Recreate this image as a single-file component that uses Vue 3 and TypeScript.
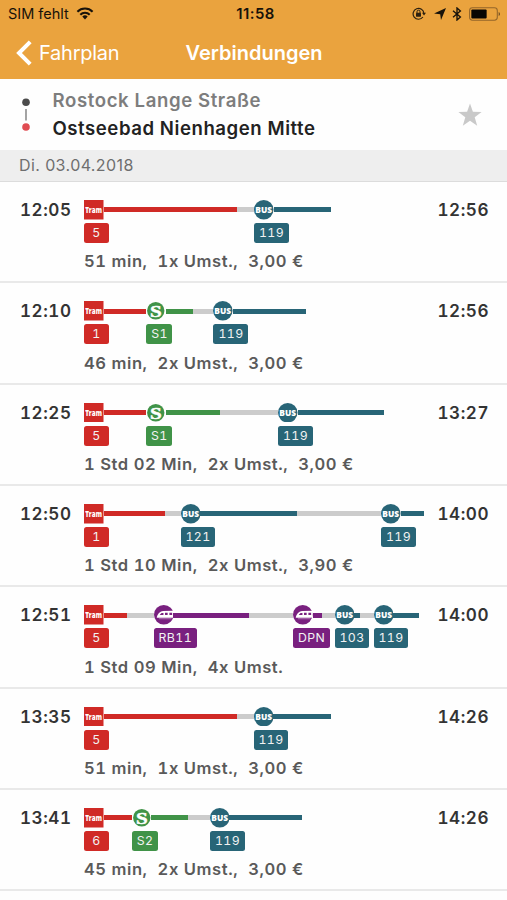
<script setup lang="ts">
type Mode = 'tram' | 'bus' | 'sbahn' | 'train'

interface Leg {
  mode: Mode
  line: string
  ride: number
  wait: number
}

interface Connection {
  departure: string
  arrival: string
  summary: string[]
  legs: Leg[]
}

const leg = (mode: Mode, line: string, ride: number, wait = 0): Leg => ({ mode, line, ride, wait })

const connections: Connection[] = [
  {
    departure: '12:05',
    arrival: '12:56',
    summary: ['51 min,', '1x Umst.,', '3,00 €'],
    legs: [leg('tram', '5', 153, 17), leg('bus', '119', 77)],
  },
  {
    departure: '12:10',
    arrival: '12:56',
    summary: ['46 min,', '2x Umst.,', '3,00 €'],
    legs: [leg('tram', '1', 62.3), leg('sbahn', 'S1', 47.2, 20), leg('bus', '119', 93)],
  },
  {
    departure: '12:25',
    arrival: '13:27',
    summary: ['1 Std 02 Min,', '2x Umst.,', '3,00 €'],
    legs: [leg('tram', '5', 62), leg('sbahn', 'S1', 74, 58), leg('bus', '119', 106.3)],
  },
  {
    departure: '12:50',
    arrival: '14:00',
    summary: ['1 Std 10 Min,', '2x Umst.,', '3,90 €'],
    legs: [leg('tram', '1', 81, 15.5), leg('bus', '121', 116.5, 84), leg('bus', '119', 43)],
  },
  {
    departure: '12:51',
    arrival: '14:00',
    summary: ['1 Std 09 Min,', '4x Umst.'],
    legs: [
      leg('tram', '5', 43, 26.5),
      leg('train', 'RB11', 95.5, 44),
      leg('train', 'DPN', 29, 12.5),
      leg('bus', '103', 25, 14),
      leg('bus', '119', 45.5),
    ],
  },
  {
    departure: '13:35',
    arrival: '14:26',
    summary: ['51 min,', '1x Umst.,', '3,00 €'],
    legs: [leg('tram', '5', 152.7, 16.8), leg('bus', '119', 77)],
  },
  {
    departure: '13:41',
    arrival: '14:26',
    summary: ['45 min,', '2x Umst.,', '3,00 €'],
    legs: [leg('tram', '6', 47.7), leg('sbahn', 'S2', 56.3, 22), leg('bus', '119', 92)],
  },
]
</script>

<template>
  <div class="screen">
    <header class="top">
      <div class="status">
        <div class="carrier">
          <span>SIM fehlt</span>
          <svg class="wifi" viewBox="0 0 18 13">
            <path d="M9 12.4 6.3 9.6a3.9 3.9 0 0 1 5.4 0Z" fill="#17120a" />
            <path d="M4.3 7.7a6.7 6.7 0 0 1 9.4 0M1.4 4.7a10.8 10.8 0 0 1 15.2 0" fill="none" stroke="#17120a" stroke-width="2.1" />
          </svg>
        </div>
        <span class="clock">11:58</span>
        <div class="indicators">
          <svg class="lock" viewBox="0 0 14 13">
            <path d="M10.9 10A5.4 5.4 0 1 1 11.9 6.5" fill="none" stroke="#2c200f" stroke-width="1.2" />
            <path d="M10 5.8h4l-2 2.8Z" fill="#2c200f" />
            <rect x="4" y="5.8" width="5" height="3.9" rx=".4" fill="#2c200f" />
            <path d="M5 6V4.7a1.5 1.5 0 0 1 3 0V6" fill="none" stroke="#2c200f" stroke-width="1" />
          </svg>
          <svg class="arrow" viewBox="0 0 12 12"><path d="M12 0 7 12 6.2 6.2 0 5.4Z" fill="#17120a" /></svg>
          <svg class="bluetooth" viewBox="0 0 10 14">
            <path d="M1 3.8 8.4 10 5 13V1l3.4 3L1 10.2" fill="none" stroke="#17120a" stroke-width="1.35" />
          </svg>
          <svg class="battery" viewBox="0 0 33 14">
            <rect x=".6" y=".6" width="28.6" height="12.8" rx="3" fill="none" stroke="#94662a" stroke-width="1.1" />
            <rect x="2.4" y="2.3" width="15.8" height="9.4" rx="1" fill="#080602" />
            <path d="M30.6 5v4c1.8-.5 1.8-3.5 0-4Z" fill="#6c4a20" />
          </svg>
        </div>
      </div>
      <nav class="nav">
        <div class="back">
          <svg class="chevron" viewBox="0 0 16 26"><path d="M14.2 1.8 3 13l11.2 11.2" fill="none" stroke="#fff" stroke-width="4" /></svg>
          <span>Fahrplan</span>
        </div>
        <h1>Verbindungen</h1>
      </nav>
    </header>

    <section class="route">
      <svg class="route-mark" viewBox="0 0 8 34">
        <circle cx="4" cy="4.2" r="3.8" fill="#4b4b4b" />
        <path d="M4 11v11.5" stroke="#9a9a9a" stroke-width="1.8" />
        <circle cx="4" cy="29" r="3.8" fill="#e04c52" />
      </svg>
      <div class="stops">
        <div class="from">Rostock Lange Straße</div>
        <div class="to">Ostseebad Nienhagen Mitte</div>
      </div>
      <svg class="star" viewBox="0 0 24 24">
        <path d="m12 .5 2.9 8.3 8.7.2-6.9 5.3 2.5 8.5L12 17.8l-7.2 5 2.5-8.5L.4 9l8.7-.2Z" fill="#c9c9c9" />
      </svg>
    </section>

    <div class="date">Di. 03.04.2018</div>

    <main>
      <article v-for="item in connections" :key="item.departure" class="connection">
        <time class="departure">{{ item.departure }}</time>
        <div class="middle">
          <div class="legs">
            <div
              v-for="(part, i) in item.legs"
              :key="i"
              class="leg"
              :class="part.mode"
              :style="{ width: part.ride + part.wait + 'px' }"
            >
              <div class="track">
                <svg class="mode-icon" viewBox="0 0 20 20">
                  <template v-if="part.mode === 'tram'">
                    <rect width="20" height="20" fill="#d02a26" />
                    <text x="1.2" y="12.9" textLength="17.2" lengthAdjust="spacingAndGlyphs" class="tram-text">Tram</text>
                  </template>
                  <template v-else-if="part.mode === 'bus'">
                    <circle cx="10" cy="10" r="10" fill="#286577" />
                    <text x="1.4" y="13.2" textLength="17.2" lengthAdjust="spacingAndGlyphs" class="bus-text">BUS</text>
                  </template>
                  <template v-else-if="part.mode === 'sbahn'">
                    <circle cx="10" cy="10" r="8.9" fill="#409348" />
                    <text x="4" y="16" textLength="12" lengthAdjust="spacingAndGlyphs" class="s-text">S</text>
                  </template>
                  <template v-else>
                    <circle cx="10" cy="10" r="10" fill="#79207f" />
                    <path d="M2.8 13C3.4 9.8 5.6 6.6 9.4 6.2L20 5.8V13Z" fill="#fff" />
                    <path d="M7.8 8.1h1.9v2.1H5.9c.5-.9 1.1-1.6 1.9-2.1ZM11.3 8h2.7v2.2h-2.7ZM15.8 7.9h2.8v2.3h-2.8Z" fill="#79207f" />
                    <path d="M5 14.1h13" stroke="#c99bcc" stroke-width=".7" />
                  </template>
                </svg>
                <i class="ride"></i>
                <i class="wait" :style="{ width: part.wait + 'px' }"></i>
              </div>
              <span class="badge">{{ part.line }}</span>
            </div>
          </div>
          <div class="summary">
            <span v-for="text in item.summary" :key="text">{{ text }}</span>
          </div>
        </div>
        <time class="arrival">{{ item.arrival }}</time>
      </article>
    </main>
  </div>
</template>

<style>
body {
  background: #fff;
}
</style>

<style scoped>
.screen {
  width: 507px;
  height: 900px;
  overflow: hidden;
  background: #fefefe;
  font-family: Inter, 'Liberation Sans', sans-serif;
}
svg {
  display: block;
  flex: none;
}
.top {
  height: 79px;
  background: #eaa33e;
}
.status {
  display: grid;
  grid-template-columns: 1fr auto 1fr;
  align-items: center;
  height: 27px;
  padding: 0 6px 0 8px;
  color: #17120a;
  font-size: 14.5px;
}
.carrier {
  display: flex;
  align-items: center;
  gap: 7.5px;
}
.wifi {
  width: 18px;
  height: 13px;
}
.clock {
  padding-left: 2px;
  font-size: 14.9px;
  font-weight: 600;
  letter-spacing: 0.5px;
}
.indicators {
  display: flex;
  justify-content: flex-end;
  align-items: center;
}
.lock {
  width: 14px;
  height: 13px;
  margin-right: 8px;
}
.arrow {
  width: 12px;
  height: 12px;
  margin-right: 6.5px;
}
.bluetooth {
  width: 10px;
  height: 14px;
  margin-right: 7px;
}
.battery {
  width: 32px;
  height: 14px;
}
.nav {
  display: grid;
  grid-template-columns: 1fr auto 1fr;
  align-items: center;
  height: 51px;
  padding: 0 15px 0 16px;
  color: #fff;
}
.back {
  display: flex;
  align-items: center;
  gap: 7px;
  font-size: 20px;
  letter-spacing: -0.25px;
}
.chevron {
  width: 16px;
  height: 26px;
}
h1 {
  margin: 0;
  font-size: 20px;
  font-weight: 600;
}
.route {
  display: flex;
  align-items: center;
  box-sizing: border-box;
  height: 71px;
  padding: 0 25px 0 22px;
}
.route-mark {
  width: 8px;
  height: 34px;
  margin-right: 22.5px;
}
.stops {
  flex: 1;
  padding-bottom: 2px;
  font-size: 18.6px;
  font-weight: 600;
  line-height: 28px;
  letter-spacing: 0.6px;
}
.from {
  color: #7d7d7d;
}
.to {
  color: #222;
  letter-spacing: 0.55px;
}
.star {
  width: 24px;
  height: 24px;
}
.date {
  box-sizing: border-box;
  height: 32px;
  padding-left: 19px;
  border-bottom: 1px solid #dcdcdc;
  background: #eee;
  color: #6e6e6e;
  font-size: 16px;
  line-height: 31px;
  letter-spacing: 0.4px;
}
.connection {
  display: flex;
  box-sizing: border-box;
  height: 101.35px;
  padding: 18px 18px 0 20px;
  border-bottom: 2px solid #e9e9e9;
  font-variant-numeric: tabular-nums;
}
time {
  color: #333;
  font-size: 17.1px;
  font-weight: 600;
  line-height: 20px;
  letter-spacing: 0.55px;
}
.departure {
  width: 64px;
}
.middle {
  flex: 1;
}
.legs {
  display: flex;
}
.leg {
  flex: none;
}
.tram {
  --tone: #d02a26;
}
.bus {
  --tone: #286577;
}
.sbahn {
  --tone: #409348;
}
.train {
  --tone: #79207f;
}
.track {
  display: flex;
  align-items: center;
  height: 19.5px;
}
.mode-icon {
  width: 19.5px;
  height: 19.5px;
}
.ride {
  flex: 1;
  height: 5px;
  background: var(--tone);
}
.wait {
  flex: none;
  height: 5px;
  background: #ccc;
}
.badge {
  display: block;
  box-sizing: border-box;
  width: fit-content;
  min-width: 24.5px;
  height: 20px;
  margin-top: 3.5px;
  padding: 0 4.5px 0 5px;
  border-radius: 2.5px;
  background: var(--tone);
  color: #f2f2f2;
  font-size: 12.3px;
  line-height: 20.5px;
  letter-spacing: 0.4px;
  text-align: center;
}
.summary {
  display: flex;
  gap: 10px;
  margin-top: 7.3px;
  color: #5a5a5a;
  font-size: 16.6px;
  font-weight: 600;
  line-height: 22px;
  letter-spacing: 0.54px;
}
.tram-text,
.bus-text {
  fill: #fff;
  font-family: 'Open Sans', Lato, sans-serif;
  font-size: 8.4px;
  font-weight: 800;
}
.bus-text {
  font-size: 8.8px;
}
.s-text {
  fill: #fff;
  font-family: 'Liberation Serif', serif;
  font-size: 18px;
  font-weight: 700;
  stroke: #fff;
  stroke-width: 0.5px;
}
</style>
